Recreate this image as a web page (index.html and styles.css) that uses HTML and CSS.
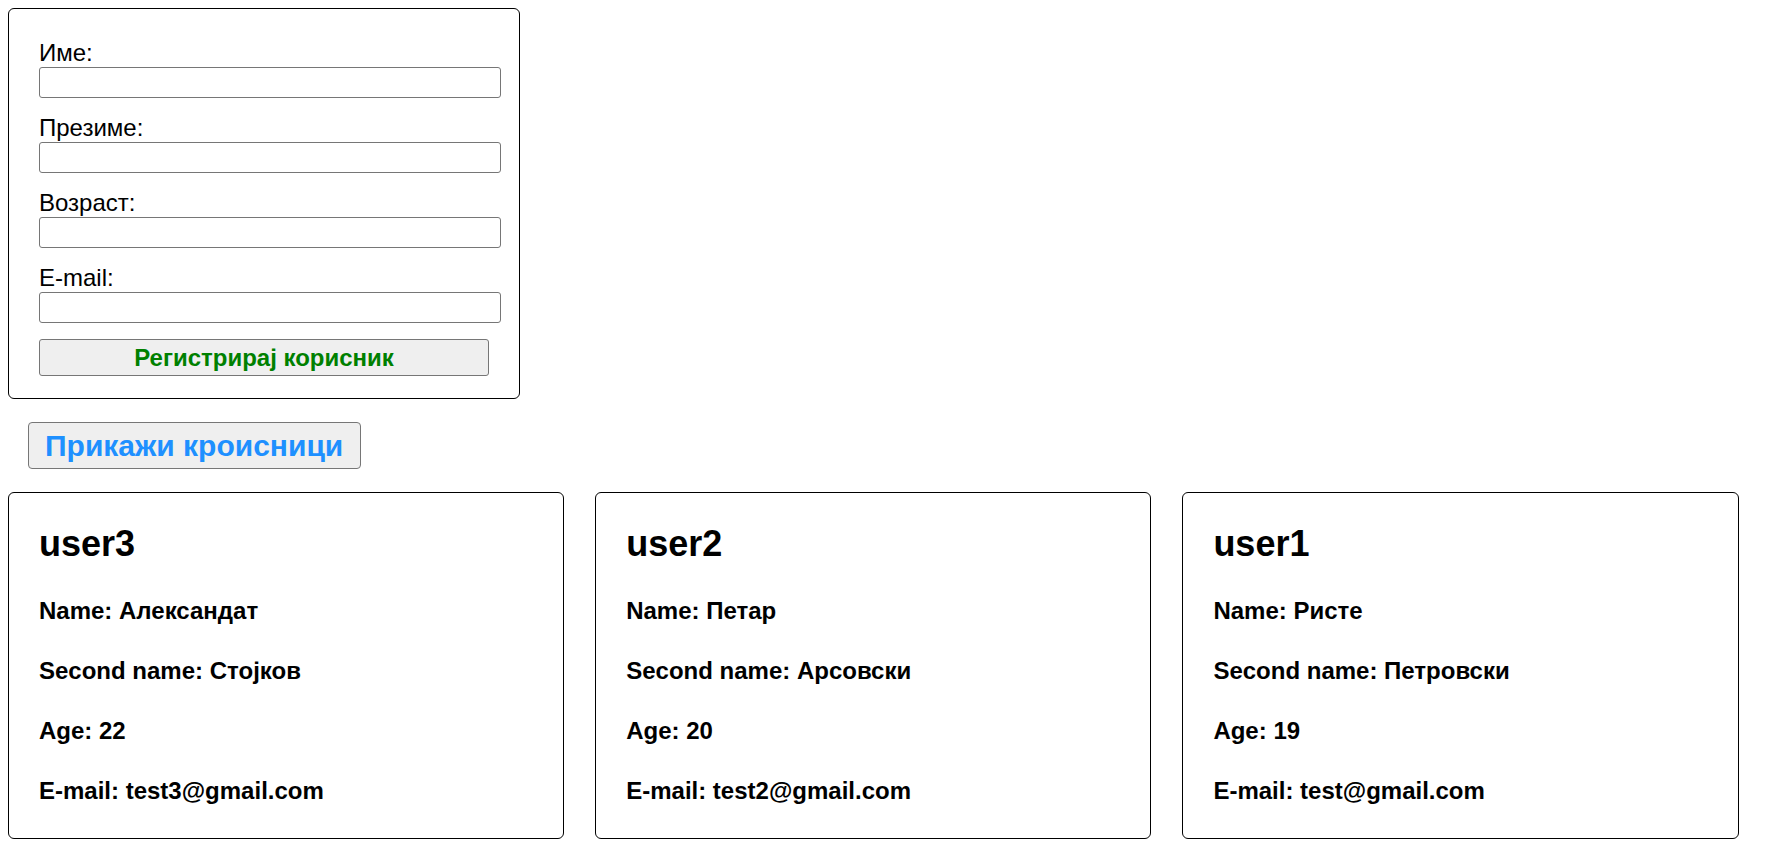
FILE: index.html
```html
<!DOCTYPE html>
<html lang="mk">
<head>
<meta charset="utf-8">
<title>Корисници</title>
<link rel="stylesheet" href="styles.css">
</head>
<body>
<form class="reg-form">
  <div class="field">
    <label class="field-label" for="ime">Име:</label>
    <input class="field-input" id="ime" type="text">
  </div>
  <div class="field">
    <label class="field-label" for="prezime">Презиме:</label>
    <input class="field-input" id="prezime" type="text">
  </div>
  <div class="field">
    <label class="field-label" for="vozrast">Возраст:</label>
    <input class="field-input" id="vozrast" type="text">
  </div>
  <div class="field">
    <label class="field-label" for="email">E-mail:</label>
    <input class="field-input" id="email" type="text">
  </div>
  <button class="register-btn" type="button">Регистрирај корисник</button>
</form>

<button class="show-btn" type="button">Прикажи кроисници</button>

<div class="cards">
  <div class="card">
    <h2 class="card-title">user3</h2>
    <h4 class="card-line">Name: Александат</h4>
    <h4 class="card-line">Second name: Стојков</h4>
    <h4 class="card-line">Age: 22</h4>
    <h4 class="card-line">E-mail: test3@gmail.com</h4>
  </div>
  <div class="card">
    <h2 class="card-title">user2</h2>
    <h4 class="card-line">Name: Петар</h4>
    <h4 class="card-line">Second name: Арсовски</h4>
    <h4 class="card-line">Age: 20</h4>
    <h4 class="card-line">E-mail: test2@gmail.com</h4>
  </div>
  <div class="card">
    <h2 class="card-title">user1</h2>
    <h4 class="card-line">Name: Ристе</h4>
    <h4 class="card-line">Second name: Петровски</h4>
    <h4 class="card-line">Age: 19</h4>
    <h4 class="card-line">E-mail: test@gmail.com</h4>
  </div>
</div>
</body>
</html>
```

FILE: styles.css
```css
html, body {
  background: #ffffff;
}

body {
  margin: 8px;
  font-family: "Liberation Sans", Arial, sans-serif;
  color: #000000;
}

.reg-form {
  width: 450px;
  padding: 30px 30px 22px 30px;
  border: 1px solid #000000;
  border-radius: 6px;
  margin: 0;
}

.field {
  display: flex;
  flex-direction: column;
  margin-bottom: 16px;
}

.field-label {
  font-size: 24px;
  line-height: 28px;
}

.field-input {
  width: 100%;
  height: 29px;
  padding: 0 5px;
  margin: 0;
  border: 1px solid #767676;
  border-radius: 3px;
  font-family: "Liberation Sans", Arial, sans-serif;
  font-size: 20px;
  background: #ffffff;
  outline: none;
}

.register-btn {
  display: block;
  width: 100%;
  margin: 0;
  padding: 4px 6px;
  border: 1px solid #767676;
  border-radius: 3px;
  background: #efefef;
  color: #008000;
  font-family: "Liberation Sans", Arial, sans-serif;
  font-size: 24px;
  font-weight: bold;
  line-height: 27px;
}

.show-btn {
  display: block;
  margin: 23px 0 23px 20px;
  padding: 6px 17px 6px 16px;
  border: 1px solid #767676;
  border-radius: 4px;
  background: #efefef;
  color: #1e90ff;
  font-family: "Liberation Sans", Arial, sans-serif;
  font-size: 30px;
  font-weight: bold;
  line-height: 33px;
}

.cards {
  display: flex;
  gap: 31px;
  align-items: flex-start;
}

.card {
  width: 28%;
  padding: 0 30px;
  border: 1px solid #000000;
  border-radius: 6px;
}

.card-title {
  margin: 30px 0;
  font-size: 36px;
  line-height: 42px;
  font-weight: bold;
}

.card-line {
  margin: 32px 0;
  font-size: 24px;
  line-height: 28px;
  font-weight: bold;
}

.card-line:last-child {
  margin-bottom: 33px;
}
```
